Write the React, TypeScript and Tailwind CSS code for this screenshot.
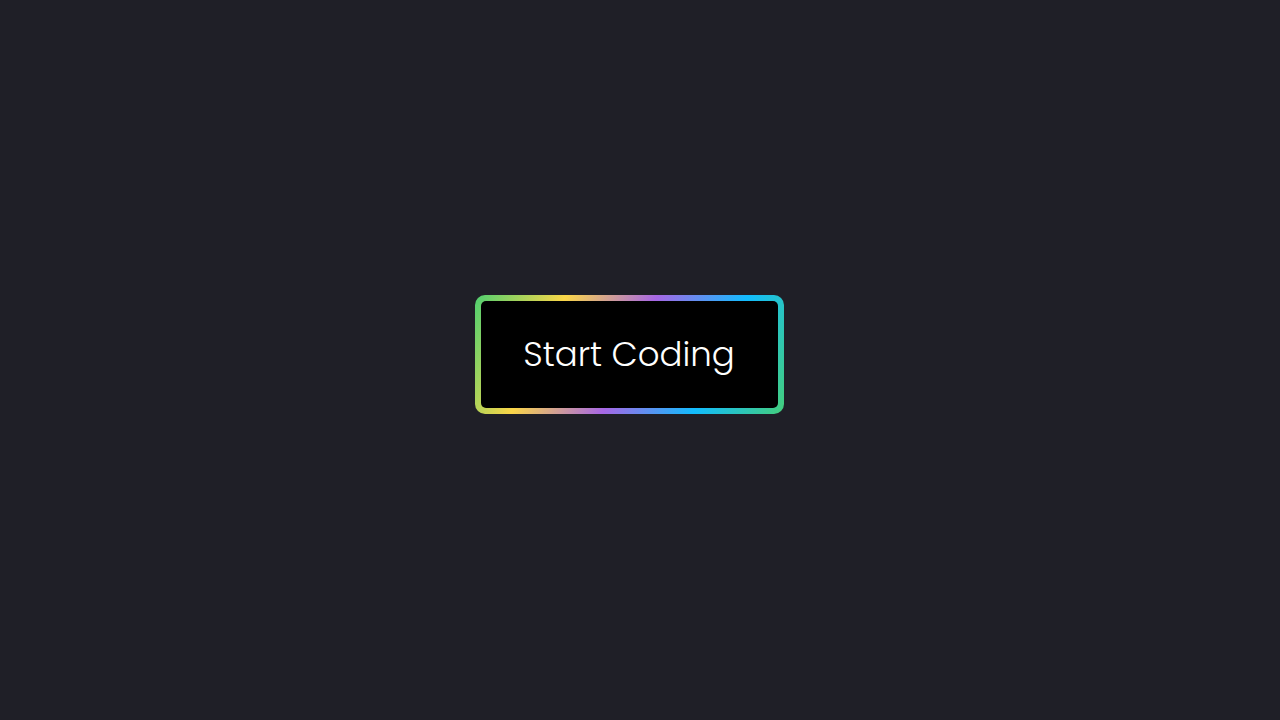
import React from "react";

export default function App() {
  return (
    <div className="w-full h-screen bg-[#1f1f27] flex items-center justify-center pr-[22px] pb-[12px]">
      <div className="w-[309px] h-[119px] rounded-[10px] p-[6px] bg-[linear-gradient(115deg,#4fcf70,#fad648,#a767e5,#12bcfe,#44ce7b)]">
        <div className="w-full h-full bg-black rounded-[5px] flex items-center justify-center">
          <span
            className="text-white text-[34px] font-light leading-none"
            style={{ fontFamily: "Poppins, Inter, 'Noto Sans', sans-serif" }}
          >
            Start Coding
          </span>
        </div>
      </div>
    </div>
  );
}
